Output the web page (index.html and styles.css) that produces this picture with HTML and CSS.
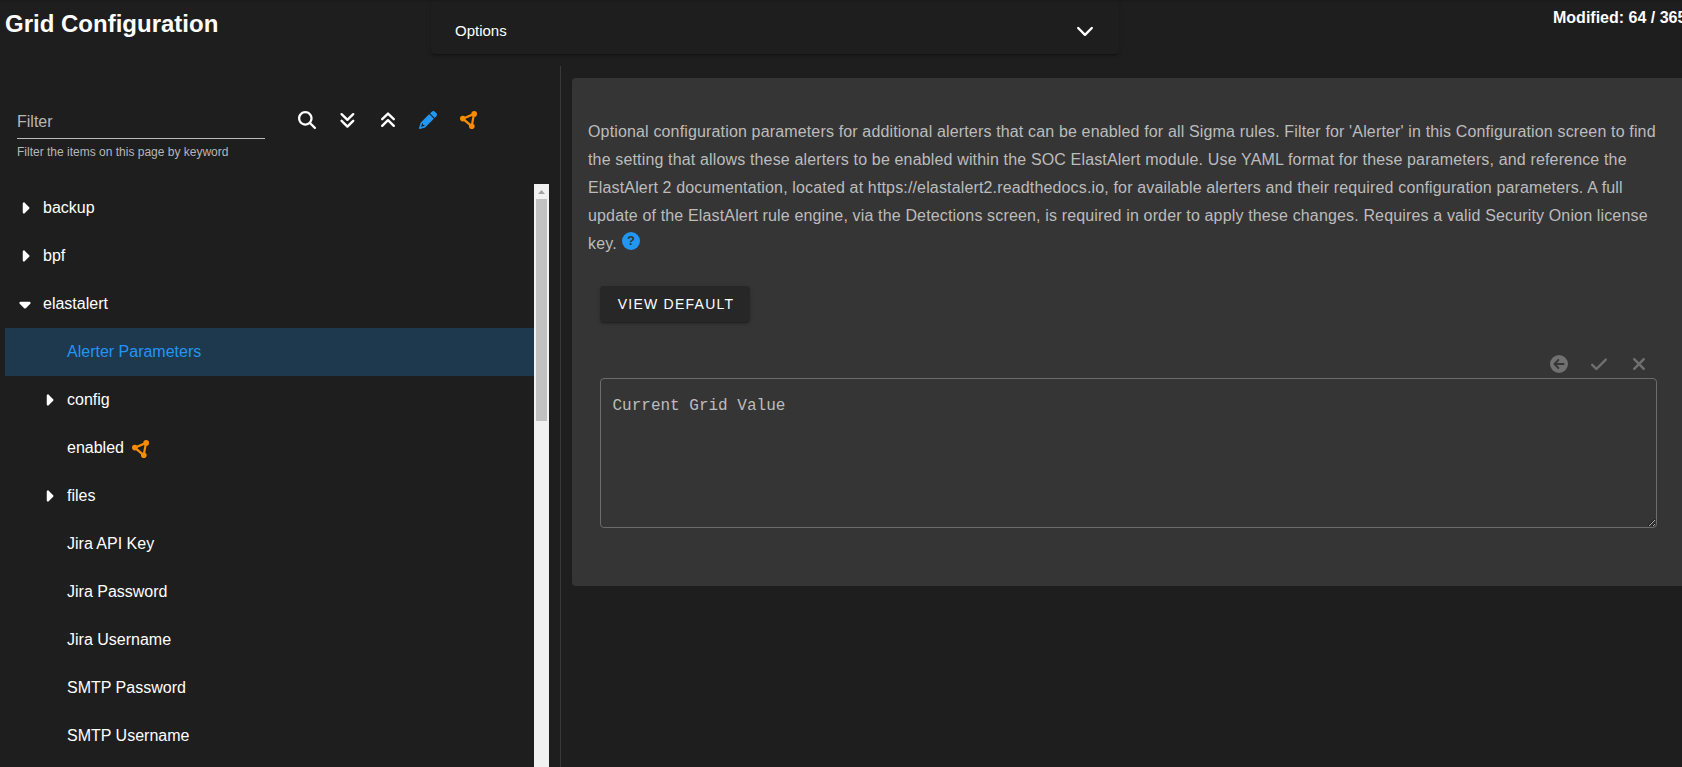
FILE: index.html
```html
<!DOCTYPE html>
<html lang="en">
<head>
<meta charset="utf-8">
<title>Grid Configuration</title>
<link rel="stylesheet" href="styles.css">
</head>
<body>
<svg class="sprite" aria-hidden="true">
  <symbol id="right" viewBox="0 0 256 512"><path d="M246.6 278.6c12.5-12.5 12.5-32.8 0-45.3l-128-128c-9.2-9.2-22.9-11.9-34.9-6.9s-19.8 16.6-19.8 29.6v256c0 12.9 7.8 24.6 19.8 29.6s25.7 2.2 34.9-6.9l128-128z"/></symbol>
  <symbol id="down" viewBox="0 0 320 512"><path d="M137.4 374.6c12.5 12.5 32.8 12.5 45.3 0l128-128c9.2-9.2 11.9-22.9 6.9-34.9s-16.6-19.8-29.6-19.8H32c-12.9 0-24.6 7.8-29.6 19.8s-2.2 25.7 6.9 34.9l128 128z"/></symbol>
  <symbol id="nodes" viewBox="0 0 18 18"><path d="M2.800 7.700 14 2.900 11.700 15.200Z" fill="none" stroke="currentColor" stroke-width="2.2"/><circle cx="2.800" cy="7.600" r="2.800"/><circle cx="14.200" cy="2.900" r="2.800"/><circle cx="11.800" cy="15.200" r="2.800"/></symbol>
</svg>
<header class="top">
  <h1 class="title">Grid Configuration</h1>
  <div class="options"><span>Options</span><svg class="chev" viewBox="0 0 18 18"><path d="m2.2 6 6.8 6.8L15.8 6"/></svg></div>
  <div class="modified">Modified: 64 / 365</div>
</header>
<main class="main">
  <aside class="side">
    <div class="tools">
      <div class="filter"><div class="field">Filter</div><div class="hint">Filter the items on this page by keyword</div></div>
      <div class="icons">
        <svg class="ic" viewBox="0 0 512 512"><path d="M416 208c0 45.9-14.9 88.3-40 122.7L502.6 457.4c12.5 12.5 12.5 32.8 0 45.3s-32.8 12.5-45.3 0L330.7 376c-34.4 25.2-76.8 40-122.7 40C93.1 416 0 322.9 0 208S93.1 0 208 0s208 93.1 208 208zM208 352a144 144 0 1 0 0-288 144 144 0 1 0 0 288z"/></svg>
        <svg class="ic line" viewBox="0 0 18 18"><path d="m3.600 3.200 5.800 5.600 5.800-5.600M3.600 9.800l5.800 5.800 5.800-5.800"/></svg>
        <svg class="ic line" viewBox="0 0 18 18"><path d="M3.200 8.200 9 2.600l5.800 5.600M3.200 14.800 9 9.200l5.800 5.600"/></svg>
        <svg class="ic blue" viewBox="0 0 512 512"><path d="M410.300 231l11.300-11.300-33.900-33.900-62.100-62.100L291.700 89.800l-11.300 11.300-22.600 22.600L58.600 322.900c-10.400 10.400-18 23.300-22.200 37.400L1 480.700c-2.500 8.400-.2 17.500 6.100 23.700s15.300 8.500 23.700 6.100l120.300-35.400c14.100-4.200 27-11.800 37.400-22.200L387.700 253.700 410.300 231zM160 399.400l-9.100 22.700c-4 3.100-8.500 5.400-13.300 6.900L59.400 452l23-78.100c1.400-4.900 3.800-9.400 6.900-13.300l22.700-9.100v32c0 8.800 7.200 16 16 16h32zM362.700 18.700L348.300 33.200 325.700 55.800 314.300 67.100l33.900 33.900 62.100 62.100 33.900 33.900 11.300-11.300 22.600-22.600 14.500-14.500c25-25 25-65.500 0-90.500L453.300 18.700c-25-25-65.500-25-90.500 0z"/></svg>
        <svg class="ic orange"><use href="#nodes"/></svg>
      </div>
    </div>
    <div class="scroller">
      <ul class="tree">
        <li class="row"><svg class="caret"><use href="#right"/></svg>backup</li>
        <li class="row"><svg class="caret"><use href="#right"/></svg>bpf</li>
        <li class="row"><svg class="caret"><use href="#down"/></svg>elastalert</li>
        <li class="row child active">Alerter Parameters</li>
        <li class="row child"><svg class="caret"><use href="#right"/></svg>config</li>
        <li class="row child">enabled<svg class="ic orange mark"><use href="#nodes"/></svg></li>
        <li class="row child"><svg class="caret"><use href="#right"/></svg>files</li>
        <li class="row child">Jira API Key</li>
        <li class="row child">Jira Password</li>
        <li class="row child">Jira Username</li>
        <li class="row child">SMTP Password</li>
        <li class="row child">SMTP Username</li>
      </ul>
      <div class="bar"><svg class="arrow" viewBox="0 0 15 15"><path d="M4 10h7L7.500 6z"/></svg><div class="thumb"></div></div>
    </div>
  </aside>
  <section class="detail">
    <div class="card">
      <p class="desc">Optional configuration parameters for additional alerters that can be enabled for all Sigma rules. Filter for 'Alerter' in this Configuration screen to find<br>the setting that allows these alerters to be enabled within the SOC ElastAlert module. Use YAML format for these parameters, and reference the<br>ElastAlert 2 documentation, located at https://elastalert2.readthedocs.io, for available alerters and their required configuration parameters. A full<br>update of the ElastAlert rule engine, via the Detections screen, is required in order to apply these changes. Requires a valid Security Onion license<br>key. <span class="help">?</span></p>
      <button class="btn">VIEW DEFAULT</button>
      <div class="actions">
        <svg class="ic" viewBox="0 0 18 18"><circle cx="9" cy="9" r="9"/><path class="cut" d="M13.600 9H4.600M8.400 5 4.400 9l4 4"/></svg>
        <svg class="ic line" viewBox="0 0 18 18"><path d="m2.200 9.800 4.200 4.200 9.400-9.400"/></svg>
        <svg class="ic line" viewBox="0 0 18 18"><path d="m4.200 4.200 9.600 9.600m0-9.600-9.600 9.600"/></svg>
      </div>
      <textarea class="value" placeholder="Current Grid Value"></textarea>
    </div>
  </section>
</main>
</body>
</html>
```
FILE: styles.css
```css
* { box-sizing: border-box; }
body { margin: 0; height: 767px; overflow: hidden; background: #1e1e1e; color: #fff; font: 16px/24px "Liberation Sans", Arial, sans-serif; }
svg { fill: currentColor; flex: none; }
.sprite { display: none; }
.top { display: flex; height: 66px; align-items: flex-start; box-shadow: inset 0 2px 2px -1px rgba(0,0,0,.14); }
.title { flex: none; width: 431px; margin: 0; padding: 8px 0 0 5px; font-size: 24px; line-height: 32px; font-weight: 700; }
.options { flex: none; display: flex; align-items: center; justify-content: space-between; width: 688px; height: 54px; padding: 8px 25px 0 24px; border-radius: 4px; font-size: 15px; box-shadow: 0 3px 1px -2px rgba(0,0,0,.2), 0 2px 2px rgba(0,0,0,.14), 0 1px 5px rgba(0,0,0,.12); }
.chev { width: 18px; height: 18px; fill: none; stroke: currentColor; stroke-width: 2.4; stroke-linecap: round; stroke-linejoin: round; }
.modified { flex: none; margin-left: 434px; padding-top: 6px; font-weight: 700; white-space: nowrap; }
.main { display: flex; height: 701px; }
.side { width: 561px; border-right: 1px solid #393939; display: flex; flex-direction: column; padding-left: 5px; }
.tools { display: flex; height: 118px; padding: 36px 0 0 12px; }
.filter { width: 248px; color: #b7b7b7; }
.field { height: 37px; padding-top: 8px; border-bottom: 1px solid #bbb; line-height: 24px; }
.hint { padding-top: 6px; font-size: 12px; line-height: 14px; }
.icons { display: flex; gap: 22.400px; padding: 9px 0 0 33px; }
.ic { width: 18px; height: 18px; }
.line { fill: none; stroke: currentColor; stroke-width: 2.4; stroke-linecap: round; stroke-linejoin: round; }
.blue { color: #2196f3; }
.orange { color: #fb8c00; }
.scroller { display: flex; height: 583px; }
.tree { width: 529px; margin: 0; padding: 0; list-style: none; }
.row { display: flex; align-items: center; height: 48px; padding-left: 12px; }
.caret { width: 16px; height: 18px; margin-right: 10px; }
.child { padding-left: 62px; }
.child:has(.caret) { padding-left: 36px; }
.active { color: #2196f3; background: #1e384d; }
.mark { margin-left: 8.500px; margin-top: 2px; }
.bar { width: 15px; background: #f1f1f1; }
.arrow { display: block; width: 15px; height: 15px; color: #a3a3a3; }
.thumb { width: 11px; height: 222px; margin: 0 auto; background: #c1c1c1; }
.detail { flex: 1; padding: 12px 0 0 11px; }
.card { height: 508px; padding: 40px 0 0 16px; background: #353535; border-radius: 4px 0 0 4px; }
.desc { height: 140px; margin: 0; color: #bcbcbc; line-height: 28px; letter-spacing: .152px; white-space: nowrap; }
.help { display: inline-flex; align-items: center; justify-content: center; width: 18px; height: 18px; margin: 0 0 7px .600px; vertical-align: middle; border-radius: 50%; background: #2196f3; color: #353535; font-size: 13px; line-height: 18px; font-weight: 700; }
.btn { display: block; width: 150px; height: 36px; margin: 28px 0 0 12px; padding: 0 0 0 2px; border: 0; border-radius: 4px; background: #272727; color: #fff; font: 14px "Liberation Sans", Arial, sans-serif; letter-spacing: 1.250px; box-shadow: 0 3px 1px -2px rgba(0,0,0,.2), 0 2px 2px rgba(0,0,0,.14), 0 1px 5px rgba(0,0,0,.12); }
.actions { display: flex; gap: 22px; height: 56px; padding-top: 33px; margin-left: 962px; color: #707070; }
.cut { fill: none; stroke: #353535; stroke-width: 1.800; stroke-linecap: round; stroke-linejoin: round; }
.value { display: block; width: 1057px; height: 150px; margin: 0 0 0 12px; padding: 15px 11.500px; border: 1px solid #6b6b6b; border-radius: 4px; background: transparent; color: #bcbcbc; font: 16px/24px "Liberation Mono", monospace; resize: both; outline: 0; }
.value::placeholder { color: #bcbcbc; }
```
